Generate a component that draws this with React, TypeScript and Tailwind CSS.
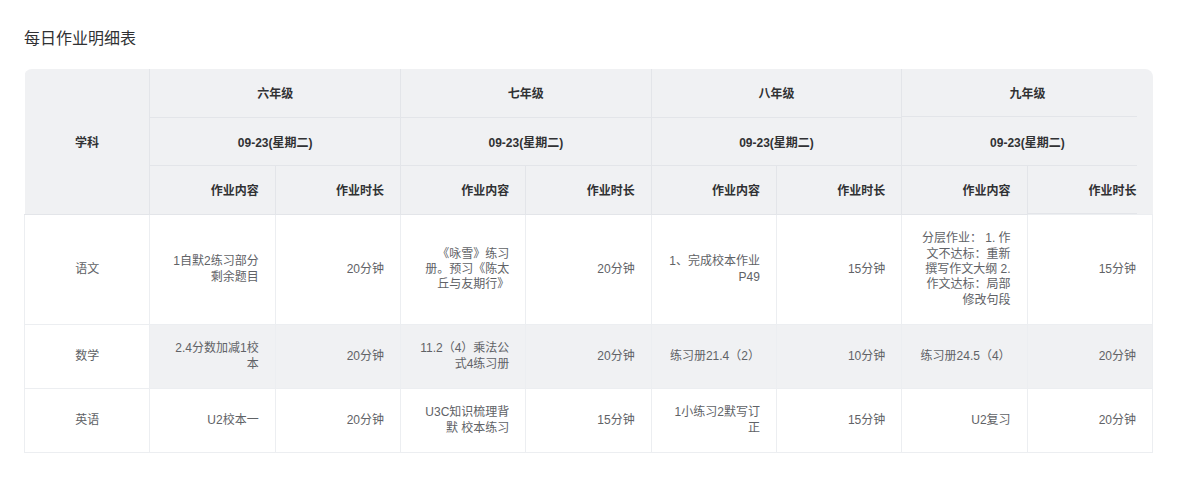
import React from 'react';

type Item = { content: string; duration: string };
type Row = { subject: string; items: Item[]; highlight?: boolean };

const grades = ['六年级', '七年级', '八年级', '九年级'];
const date = '09-23(星期二)';

const rows: Row[] = [
    {
        subject: '语文',
        items: [
            { content: '1自默2练习部分剩余题目', duration: '20分钟' },
            { content: '《咏雪》练习册。预习《陈太丘与友期行》', duration: '20分钟' },
            { content: '1、完成校本作业P49', duration: '15分钟' },
            { content: '分层作业： 1. 作文不达标：重新撰写作文大纲 2. 作文达标：局部修改句段', duration: '15分钟' },
        ],
    },
    {
        subject: '数学',
        highlight: true,
        items: [
            { content: '2.4分数加减1校本', duration: '20分钟' },
            { content: '11.2（4）乘法公式4练习册', duration: '20分钟' },
            { content: '练习册21.4（2）', duration: '10分钟' },
            { content: '练习册24.5（4）', duration: '20分钟' },
        ],
    },
    {
        subject: '英语',
        items: [
            { content: 'U2校本一', duration: '20分钟' },
            { content: 'U3C知识梳理背默 校本练习', duration: '15分钟' },
            { content: '1小练习2默写订正', duration: '15分钟' },
            { content: 'U2复习', duration: '20分钟' },
        ],
    },
];

const gutterLine =
    'bg-[linear-gradient(#e3e5e9,#e3e5e9)] bg-no-repeat bg-[length:calc(100%-16px)_1px] bg-[position:0_100%]';

const th = 'px-4 pt-[18px] pb-[14px]';
const thBorder = 'border-r border-b border-[#e3e5e9]';

export default function App() {
    return (
        <div className="min-h-[480px] bg-white px-6 pt-[27px] font-['Liberation_Sans','Noto_Sans_CJK_SC',sans-serif]">
            <h1 className="mb-[18px] text-base leading-6 text-[#303133]">每日作业明细表</h1>

            <div className="overflow-hidden rounded-t-lg">
                <table className="w-full table-fixed border-collapse text-xs">
                    <colgroup>
                        {Array.from({ length: 9 }).map((_, i) => (
                            <col key={i} />
                        ))}
                    </colgroup>
                    <thead className="bg-[#f0f1f3] leading-[15.6px] font-bold text-[#303133]">
                        <tr>
                            <th rowSpan={3} className={`${thBorder} ${th} text-center`}>
                                学科
                            </th>
                            {grades.map((g, i) => (
                                <th
                                    key={g}
                                    colSpan={2}
                                    className={`h-12 ${th} text-center ${
                                        i === grades.length - 1 ? gutterLine : thBorder
                                    }`}
                                >
                                    {g}
                                </th>
                            ))}
                        </tr>
                        <tr>
                            {grades.map((g, i) => (
                                <th
                                    key={g}
                                    colSpan={2}
                                    className={`h-12 ${th} text-center ${
                                        i === grades.length - 1 ? gutterLine : thBorder
                                    }`}
                                >
                                    {date}
                                </th>
                            ))}
                        </tr>
                        <tr>
                            {grades.map((g, i) => (
                                <React.Fragment key={g}>
                                    <th className={`h-[49px] ${th} ${thBorder} text-right`}>作业内容</th>
                                    <th
                                        className={`h-[49px] ${th} text-right ${
                                            i === grades.length - 1 ? gutterLine : thBorder
                                        }`}
                                    >
                                        作业时长
                                    </th>
                                </React.Fragment>
                            ))}
                        </tr>
                    </thead>
                    <tbody className="leading-[15.4px] text-[#606266]">
                        {rows.map((row) => (
                            <tr key={row.subject}>
                                <td className="h-16 border border-[#eceef1] bg-white px-4 py-4 text-center">
                                    {row.subject}
                                </td>
                                {row.items.map((item, i) => (
                                    <React.Fragment key={i}>
                                        <td
                                            className={`h-16 border border-[#eceef1] px-4 py-4 text-right ${
                                                row.highlight ? 'bg-[#f0f1f3]' : 'bg-white'
                                            }`}
                                        >
                                            {item.content}
                                        </td>
                                        <td
                                            className={`h-16 border border-[#eceef1] px-4 py-4 text-right ${
                                                row.highlight ? 'bg-[#f0f1f3]' : 'bg-white'
                                            }`}
                                        >
                                            {item.duration}
                                        </td>
                                    </React.Fragment>
                                ))}
                            </tr>
                        ))}
                    </tbody>
                </table>
            </div>
        </div>
    );
}
